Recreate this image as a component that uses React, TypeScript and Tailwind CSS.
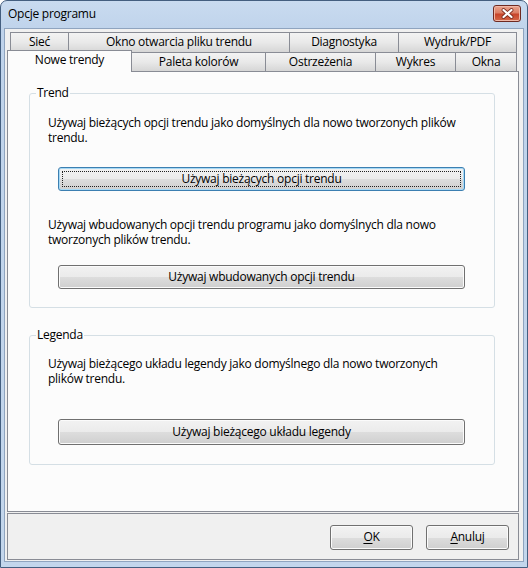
import React from "react"

const topRow = [
  { label: "Sieć", w: "w-[58px]" },
  { label: "Okno otwarcia pliku trendu", w: "w-[221px]" },
  { label: "Diagnostyka", w: "w-[109px]" },
  { label: "Wydruk/PDF", w: "w-[119px]", last: true },
]

const bottomRow = [
  { label: "Paleta kolorów", w: "w-[134px]" },
  { label: "Ostrzeżenia", w: "w-[110px]" },
  { label: "Wykres", w: "w-[80px]" },
  { label: "Okna", w: "w-[62px]", last: true },
]

function Tab({ label, w, last }: { label: string; w: string; last?: boolean }) {
  return (
    <div
      className={`${w} h-full flex items-center justify-center border-t border-l border-[#898c95] ${
        last ? "border-r" : ""
      } bg-gradient-to-b from-[#f3f3f3] via-[#e9e9e9] to-[#d6d6d6] pb-[1px]`}
    >
      {label}
    </div>
  )
}

function Button({ children, focused, className = "" }: { children: React.ReactNode; focused?: boolean; className?: string }) {
  return (
    <div
      className={`relative flex items-center justify-center rounded-[3px] border ${
        focused ? "border-[#3c7fb1] shadow-[inset_0_0_0_1px_#a7d9f5]" : "border-[#707070] shadow-[inset_0_0_0_1px_#fbfbfb]"
      } bg-[linear-gradient(to_bottom,#f2f2f2_0%,#ebebeb_50%,#dddddd_51%,#cfcfcf_100%)] ${className}`}
    >
      {focused && <div className="absolute inset-[3px] border border-dotted border-[#222]" />}
      <span className="pb-[1px]">{children}</span>
    </div>
  )
}

function CloseGlyph() {
  return (
    <svg width="13" height="11" viewBox="0 0 13 11">
      <path d="M2.5 2 L10.5 9 M10.5 2 L2.5 9" stroke="#7a2b1e" strokeWidth="3.8" strokeLinecap="round" />
      <path d="M2.5 2 L10.5 9 M10.5 2 L2.5 9" stroke="#ffffff" strokeWidth="2.2" strokeLinecap="round" />
    </svg>
  )
}

export default function App() {
  return (
    <div className="w-[528px] h-[568px] flex flex-col border border-[#445f80] rounded-t-[7px] overflow-hidden bg-[linear-gradient(to_bottom,#c9dbf0,#bfd3eb_30px,#c3d6ec)] font-['Open_Sans',sans-serif] text-[12px] tracking-[-0.25px] text-black">
      {/* title bar */}
      <div className="h-[27px] flex items-start">
        <span className="pl-[7px] pt-[4px]">Opcje programu</span>
        <div className="ml-auto mr-[6px] mt-[4px] w-[28px] h-[17px] rounded-[3px] border border-[#6e2a22] flex items-center justify-center bg-[linear-gradient(to_bottom,#eaa48f_0%,#dc7f66_45%,#c8442a_55%,#d5694a_100%)] shadow-[inset_0_0_0_1px_#f0b8a8]">
          <CloseGlyph />
        </div>
      </div>

      {/* client area */}
      <div className="flex-1 mx-[3px] mb-[5px] border border-[#8fa4bf] bg-[#f0f0f0] pt-[3px] pl-[2px] pr-[4px] pb-[1px] flex flex-col">
        {/* tabs */}
        <div className="flex h-[20px] pl-[3px]">
          {topRow.map((t) => (
            <Tab key={t.label} {...t} />
          ))}
        </div>
        <div className="flex items-end h-[19px]">
          <div className="relative z-10 w-[125px] h-[22px] -mb-px flex items-center justify-center border-t border-l border-r border-[#898c95] bg-[#fcfcfc] pb-[3px]">
            Nowe trendy
          </div>
          <div className="flex h-full -ml-px">
            {bottomRow.map((t) => (
              <Tab key={t.label} {...t} />
            ))}
          </div>
        </div>

        {/* tab page */}
        <div className="h-[441px] border border-[#898c95] bg-[#fcfcfc] pl-[21px] pr-[23px]">
          <fieldset className="mt-[13px] border border-[#d5dfe5] rounded-[3px] pl-[18px] pb-[18px]">
            <legend className="-ml-[12px] px-[1px] leading-[16px]">Trend</legend>
            <p className="mt-[14px] leading-[15px] whitespace-nowrap">
              Używaj bieżących opcji trendu jako domyślnych dla nowo tworzonych plików
              <br />
              trendu.
            </p>
            <Button focused className="mt-[22px] ml-[10px] w-[407px] h-[24px]">
              Używaj bieżących opcji trendu
            </Button>
            <p className="mt-[26px] leading-[15px] whitespace-nowrap">
              Używaj wbudowanych opcji trendu programu jako domyślnych dla nowo
              <br />
              tworzonych plików trendu.
            </p>
            <Button className="mt-[18px] ml-[10px] w-[407px] h-[24px]">Używaj wbudowanych opcji trendu</Button>
          </fieldset>

          <fieldset className="mt-[19px] border border-[#d5dfe5] rounded-[3px] pl-[18px] pb-[19px]">
            <legend className="-ml-[12px] px-[1px] leading-[16px]">Legenda</legend>
            <p className="mt-[13px] leading-[15px] whitespace-nowrap">
              Używaj bieżącego układu legendy jako domyślnego dla nowo tworzonych
              <br />
              plików trendu.
            </p>
            <Button className="mt-[33px] ml-[10px] w-[407px] h-[26px]">Używaj bieżącego układu legendy</Button>
          </fieldset>
        </div>

        {/* bottom buttons */}
        <div className="mt-px h-[47px] border border-[#898c95] bg-[#f0f0f0] flex items-start justify-end gap-[13px] pt-[11px] pr-[9px]">
          <Button className="w-[83px] h-[25px]">
            <span className="underline underline-offset-2">O</span>K
          </Button>
          <Button className="w-[83px] h-[25px]">
            <span className="underline underline-offset-2">A</span>nuluj
          </Button>
        </div>
      </div>
    </div>
  )
}
